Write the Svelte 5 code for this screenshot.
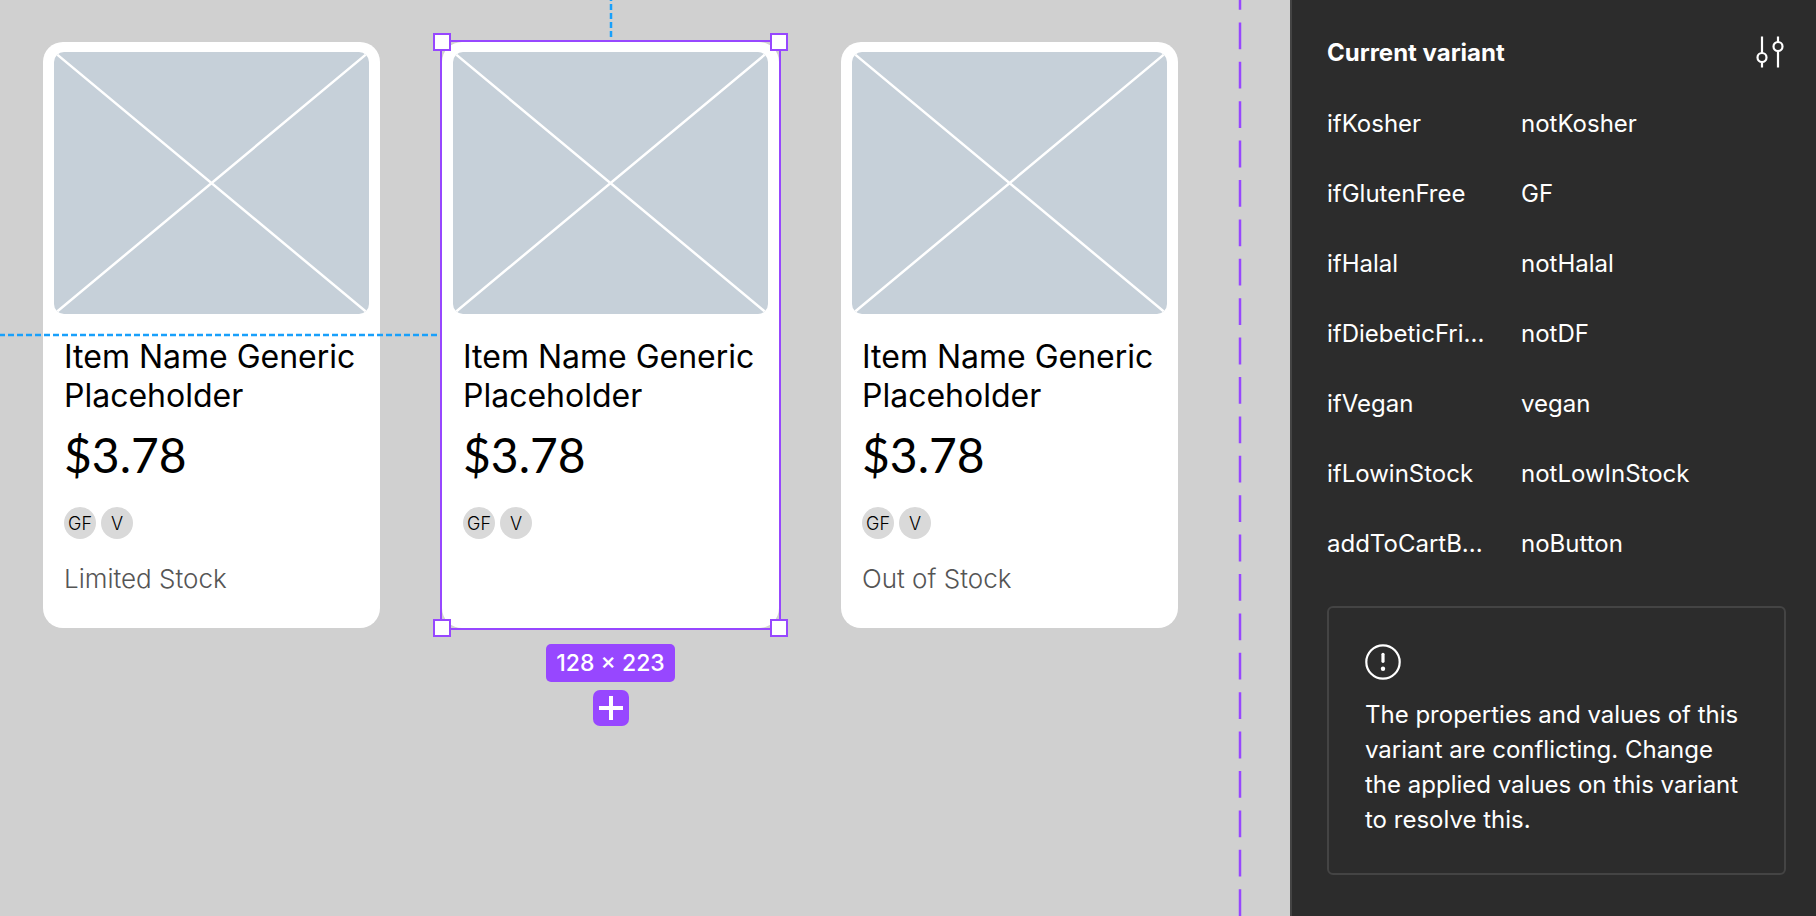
<script>
	const items = [
		{ name: "Item Name Generic Placeholder", price: "$3.78", tags: ["GF", "V"], status: "Limited Stock" },
		{ name: "Item Name Generic Placeholder", price: "$3.78", tags: ["GF", "V"], status: "" },
		{ name: "Item Name Generic Placeholder", price: "$3.78", tags: ["GF", "V"], status: "Out of Stock" }
	];

	const properties = [
		["ifKosher", "notKosher"],
		["ifGlutenFree", "GF"],
		["ifHalal", "notHalal"],
		["ifDiebeticFri...", "notDF"],
		["ifVegan", "vegan"],
		["ifLowinStock", "notLowInStock"],
		["addToCartB...", "noButton"]
	];

	const corners = ["nw", "ne", "sw", "se"];

	let selected = 1;
</script>

<div class="editor">
	<main class="canvas">
		<div class="cards">
			{#each items as item, i}
				<div class="variant">
					<article class="card">
						<svg class="placeholder" viewBox="0 0 316 263" preserveAspectRatio="none" aria-hidden="true">
							<path d="M0 0L316 263M316 0L0 263" />
						</svg>
						<div class="details">
							<h3>{item.name}</h3>
							<p class="price">{item.price}</p>
							<ul class="tags">
								{#each item.tags as tag}
									<li>{tag}</li>
								{/each}
							</ul>
							{#if item.status}
								<p class="status">{item.status}</p>
							{/if}
						</div>
					</article>

					{#if i === selected}
						<svg class="guide vertical" aria-hidden="true">
							<line x1="2" y1="0" x2="2" y2="100%" />
						</svg>
						<svg class="guide horizontal" aria-hidden="true">
							<line x1="0" y1="2" x2="100%" y2="2" />
						</svg>
						<div class="selection">
							{#each corners as corner}
								<span class="handle {corner}"></span>
							{/each}
						</div>
						<div class="below">
							<span class="size">128 × 223</span>
							<button class="add" aria-label="Add variant">
								<svg viewBox="0 0 36 36" aria-hidden="true">
									<path d="M18 6v24M6 18h24" />
								</svg>
							</button>
						</div>
					{/if}
				</div>
			{/each}
		</div>
		<svg class="frame-edge" aria-hidden="true">
			<line x1="2" y1="0" x2="2" y2="100%" />
		</svg>
	</main>

	<aside class="panel">
		<header>
			<h2>Current variant</h2>
			<button class="settings" aria-label="Variant settings">
				<svg viewBox="0 0 32 32" aria-hidden="true">
					<path d="M8 0.5V17M8 26.5V31.5M24 0.5V6M24 15.5V31.5" />
					<circle cx="8" cy="21.5" r="4.5" />
					<circle cx="24" cy="10.5" r="4.5" />
				</svg>
			</button>
		</header>

		<dl>
			{#each properties as [name, value]}
				<div class="property">
					<dt>{name}</dt>
					<dd>{value}</dd>
				</div>
			{/each}
		</dl>

		<section class="notice">
			<svg viewBox="0 0 36 36" aria-hidden="true">
				<circle class="ring" cx="18" cy="18" r="16.7" />
				<path d="M18 10.3v7" />
				<circle class="dot" cx="18" cy="24.8" r="2.2" />
			</svg>
			<p>The properties and values of this variant are conflicting. Change the applied values on this variant to resolve this.</p>
		</section>
	</aside>
</div>

<style>
	:global(body) {
		margin: 0;
	}

	.editor {
		display: flex;
		min-height: 100vh;
		font-family: Inter, "Liberation Sans", sans-serif;
		background: #d0d0d0;
	}

	h2, h3, p, dl, dd, ul {
		margin: 0;
		padding: 0;
		font-weight: 400;
	}

	button {
		padding: 0;
		border: 0;
		background: none;
		cursor: pointer;
	}

	svg {
		display: block;
		fill: none;
	}

	.canvas {
		position: relative;
		flex: 1;
		min-width: 0;
		overflow: hidden;
	}

	.cards {
		display: grid;
		grid-template-columns: repeat(3, 1fr);
		gap: 62px;
		padding: 42px 112px 0 43px;
	}

	.variant {
		position: relative;
	}

	.card {
		box-sizing: border-box;
		height: 100%;
		padding: 10px 11px 33px;
		border-radius: 20px;
		background: #fff;
	}

	.placeholder {
		width: 100%;
		aspect-ratio: 316 / 263;
		border-radius: 10px;
		background: #c6d0d9;
	}

	.placeholder path {
		stroke: #fff;
		stroke-width: 2.5;
	}

	.details {
		padding: 23px 0 0 10px;
	}

	h3 {
		font-size: 32px;
		line-height: 39px;
		color: #000;
	}

	.price {
		margin-top: 12px;
		font-family: Lato, sans-serif;
		font-size: 48px;
		line-height: 56px;
	}

	.tags {
		display: flex;
		gap: 5px;
		margin-top: 24px;
		list-style: none;
	}

	.tags li {
		display: flex;
		align-items: center;
		justify-content: center;
		width: 32px;
		height: 32px;
		border-radius: 50%;
		background: #d9d9d9;
		font-size: 18px;
		font-weight: 300;
	}

	.status {
		margin-top: 24px;
		font-size: 26px;
		font-weight: 300;
		line-height: 32px;
		color: #555;
	}

	.guide {
		position: absolute;
		stroke: #18a0fb;
		stroke-width: 2.5;
		stroke-dasharray: 6 3;
	}

	.guide.vertical {
		bottom: 100%;
		left: calc(50% - 2px);
		width: 4px;
		height: 42px;
		stroke-dashoffset: 5;
	}

	.guide.horizontal {
		top: calc(50% - 2px);
		right: 100%;
		width: 442px;
		height: 4px;
		stroke-dashoffset: 1;
	}

	.selection {
		position: absolute;
		inset: -2px;
		border: 2px solid #9747ff;
	}

	.handle {
		position: absolute;
		box-sizing: border-box;
		width: 18px;
		height: 18px;
		border: 2px solid #9747ff;
		background: #fff;
	}

	.nw, .ne {
		top: -9px;
	}

	.sw, .se {
		bottom: -9px;
	}

	.nw, .sw {
		left: -9px;
	}

	.ne, .se {
		right: -9px;
	}

	.below {
		position: absolute;
		top: 100%;
		left: 0;
		right: 0;
		display: flex;
		flex-direction: column;
		align-items: center;
		gap: 8px;
		padding-top: 16px;
	}

	.size {
		padding: 0 10px;
		border-radius: 5px;
		background: #9747ff;
		color: #fff;
		font-size: 23px;
		font-weight: 500;
		line-height: 38px;
		white-space: nowrap;
	}

	.add {
		width: 36px;
		height: 36px;
		border-radius: 7px;
		background: #9747ff;
	}

	.add path {
		stroke: #fff;
		stroke-width: 4;
	}

	.frame-edge {
		position: absolute;
		top: 0;
		right: 48px;
		width: 4px;
		height: 100%;
		stroke: #9747ff;
		stroke-width: 2.5;
		stroke-dasharray: 26.8 12.6;
		stroke-dashoffset: 17;
	}

	.panel {
		box-sizing: border-box;
		flex: 0 1 526px;
		padding: 34px 30px 40px 35px;
		border-left: 2px solid #444;
		background: #2c2c2c;
		color: #fff;
		font-size: 24px;
	}

	header {
		display: flex;
		align-items: center;
		justify-content: space-between;
		height: 36px;
	}

	h2 {
		font-size: 24px;
		font-weight: 700;
	}

	.settings {
		width: 32px;
		height: 32px;
	}

	.settings path,
	.settings circle {
		stroke: #fff;
		stroke-width: 2.2;
	}

	dl {
		margin-top: 18px;
	}

	.property {
		display: grid;
		grid-template-columns: 158px 1fr;
		column-gap: 36px;
		align-items: center;
		height: 70px;
	}

	dt {
		white-space: nowrap;
	}

	.notice {
		margin-top: 28px;
		padding: 36px;
		border: 2px solid #444;
		border-radius: 6px;
	}

	.notice svg {
		width: 36px;
		height: 36px;
	}

	.notice p {
		margin-top: 17px;
		line-height: 35px;
	}

	.notice .ring {
		stroke: #fff;
		stroke-width: 2.2;
	}

	.notice path {
		stroke: #fff;
		stroke-width: 3.2;
		stroke-linecap: round;
	}

	.notice .dot {
		fill: #fff;
	}
</style>
